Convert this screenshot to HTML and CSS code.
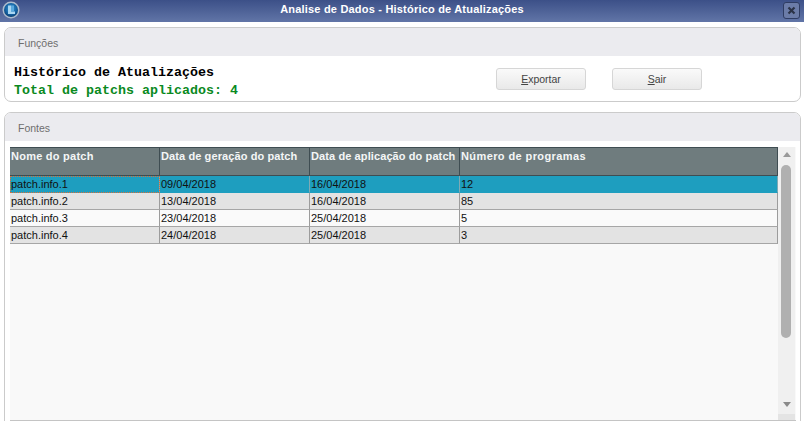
FILE: index.html
```html
<!DOCTYPE html>
<html lang="pt">
<head>
<meta charset="utf-8">
<title>Analise de Dados - Histórico de Atualizações</title>
<link rel="stylesheet" href="styles.css">
</head>
<body>
<div class="app">
  <header class="titlebar">
    <svg class="logo" width="18" height="18" viewBox="0 0 18 18">
      <defs>
        <radialGradient id="g" cx="50%" cy="40%" r="60%">
          <stop offset="0" stop-color="#3a9bd8"/>
          <stop offset="0.7" stop-color="#125f9f"/>
          <stop offset="1" stop-color="#0d3e70"/>
        </radialGradient>
      </defs>
      <circle cx="9" cy="9" r="8.5" fill="#aebccd"/>
      <circle cx="9" cy="9" r="7" fill="url(#g)"/>
      <path d="M6 4.5h3v6h4v2.5H6z" fill="#a9d6f2"/>
      <path d="M9 4.5h3v6H9z" fill="#5aa9dd"/>
    </svg>
    <span class="title">Analise de Dados - Histórico de Atualizações</span>
    <button class="close" aria-label="Fechar">
      <svg width="9" height="9" viewBox="0 0 9 9"><path d="M1.5 1.5l6 6M7.5 1.5l-6 6" stroke="#2b3347" stroke-width="2.2" fill="none"/></svg>
    </button>
  </header>

  <section class="panel panel-top">
    <div class="panel-head">Funções</div>
    <div class="functions">
      <div class="summary">
        <div class="summary-title">Histórico de Atualizações</div>
        <div class="summary-total">Total de patchs aplicados: 4</div>
      </div>
      <div class="actions">
        <button class="btn"><u>E</u>xportar</button>
        <button class="btn"><u>S</u>air</button>
      </div>
    </div>
  </section>

  <section class="panel panel-bottom">
    <div class="panel-head">Fontes</div>
    <div class="grid-wrap">
      <div class="grid">
        <div class="grid-main">
          <table class="table">
            <colgroup>
              <col class="c1"><col class="c2"><col class="c3"><col class="c4">
            </colgroup>
            <thead>
              <tr>
                <th class="th-name">Nome do patch</th>
                <th>Data de geração do patch</th>
                <th>Data de aplicação do patch</th>
                <th class="th-count">Número de programas</th>
              </tr>
            </thead>
            <tbody>
              <tr class="selected"><td class="focus">patch.info.1</td><td>09/04/2018</td><td>16/04/2018</td><td>12</td></tr>
              <tr class="even"><td>patch.info.2</td><td>13/04/2018</td><td>16/04/2018</td><td>85</td></tr>
              <tr><td>patch.info.3</td><td>23/04/2018</td><td>25/04/2018</td><td>5</td></tr>
              <tr class="even"><td>patch.info.4</td><td>24/04/2018</td><td>25/04/2018</td><td>3</td></tr>
            </tbody>
          </table>
        </div>
        <div class="scrollbar">
          <div class="arrow-up"></div>
          <div class="thumb"></div>
          <div class="arrow-down"></div>
          <div class="corner"></div>
        </div>
      </div>
    </div>
  </section>
</div>
</body>
</html>
```

FILE: styles.css
```css
* { box-sizing: border-box; }
html, body { margin: 0; padding: 0; height: 421px; overflow: hidden; background: #fff; }
body { font-family: "Liberation Sans", Arial, sans-serif; }

.app { display: flex; flex-direction: column; width: 804px; height: 421px; overflow: hidden; }

.titlebar {
  flex: none;
  display: flex;
  align-items: center;
  justify-content: center;
  position: relative;
  height: 22px;
  background: linear-gradient(#3c5088, #6175a7);
}
.logo { position: absolute; left: 2px; top: 1px; }
.title { color: #fff; font-size: 11px; font-weight: bold; letter-spacing: 0.2px; position: relative; top: -2px; }
.close {
  position: absolute;
  left: 783px;
  top: 2px;
  width: 17px;
  height: 17px;
  padding: 0;
  display: flex;
  align-items: center;
  justify-content: center;
  border: 1px solid #2f3d63;
  border-radius: 3px;
  background: #6b7ca8;
}

.panel {
  flex: none;
  margin: 0 3px 0 4px;
  border: 1px solid #cbcbcb;
  border-radius: 7px;
  background: #fff;
  overflow: hidden;
}
.panel-top { margin-top: 5px; height: 75px; }
.panel-bottom { margin-top: 10px; height: 330px; }

.panel-head {
  height: 28px;
  padding: 9px 0 0 13px;
  background: #ebebef;
  color: #6e6e6e;
  font-size: 10.5px;
  line-height: 12px;
}

.functions { display: flex; justify-content: space-between; height: 45px; padding-left: 9px; }
.summary {
  padding-top: 8px;
  font-family: "Liberation Mono", "Courier New", monospace;
  font-weight: bold;
  font-size: 13.33px;
  line-height: 18px;
}
.summary-title { color: #000; }
.summary-total { color: #0a8a1e; }

.actions { display: flex; gap: 26px; padding: 12px 98px 0 0; }
.btn {
  width: 90px;
  height: 22px;
  padding: 0;
  border: 1px solid #d6d6d6;
  border-radius: 3px;
  background: linear-gradient(#fafafa, #e9e9e9);
  color: #444;
  font-family: inherit;
  font-size: 10.5px;
}

.grid-wrap { padding: 6px 4px 0 5px; }
.grid {
  display: flex;
  height: 274px;
  background: #f9f9f9;
  border-bottom: 1px solid #c4c4c4;
}
.grid-main { width: 768px; flex: none; }

.table {
  width: 768px;
  table-layout: fixed;
  border-collapse: separate;
  border-spacing: 0;
  font-size: 11px;
  color: #111;
}
.c1, .c2, .c3 { width: 150px; }
.c4 { width: 318px; }

.table th {
  height: 29px;
  padding: 2px 0 0 1px;
  text-align: left;
  vertical-align: top;
  color: #f4f6f6;
  font-size: 11px;
  letter-spacing: 0.1px;
  line-height: 13px;
  white-space: nowrap;
  background: #6f7c7e;
  border-top: 1px solid #3f4d52;
  border-bottom: 1px solid #3f4d52;
  border-right: 1px solid #3f4d52;
}
.table .th-name { letter-spacing: 0.25px; }
.table .th-count { letter-spacing: 0.4px; }
.table td {
  height: 17px;
  padding: 0 0 0 1px;
  line-height: 15px;
  white-space: nowrap;
  background: #fafafa;
  border-right: 1px solid #9c9c9c;
  border-bottom: 1px solid #a6a6a6;
}
.table .even td { background: #e3e3e3; }
.table .selected td { background: #1e9ebf; border-bottom-color: #1e9ebf; border-right-color: #7fa9b4; }
.table .focus { outline: 1px dotted #d9703a; outline-offset: -1px; }

.scrollbar { position: relative; width: 17px; flex: none; background: #f0f0f0; }
.arrow-up, .arrow-down {
  position: absolute;
  left: 5px;
  width: 0;
  height: 0;
  border-left: 4px solid transparent;
  border-right: 4px solid transparent;
}
.arrow-up { top: 5px; border-bottom: 5px solid #9a9a9a; }
.arrow-down { top: 255px; border-top: 5px solid #8a8a8a; }
.thumb {
  position: absolute;
  left: 3px;
  top: 18px;
  width: 10px;
  height: 173px;
  border-radius: 5px;
  background: #b0b0b0;
}
.corner { position: absolute; left: 0; right: 0; bottom: 0; height: 6px; background: #e4e4e4; }
```
